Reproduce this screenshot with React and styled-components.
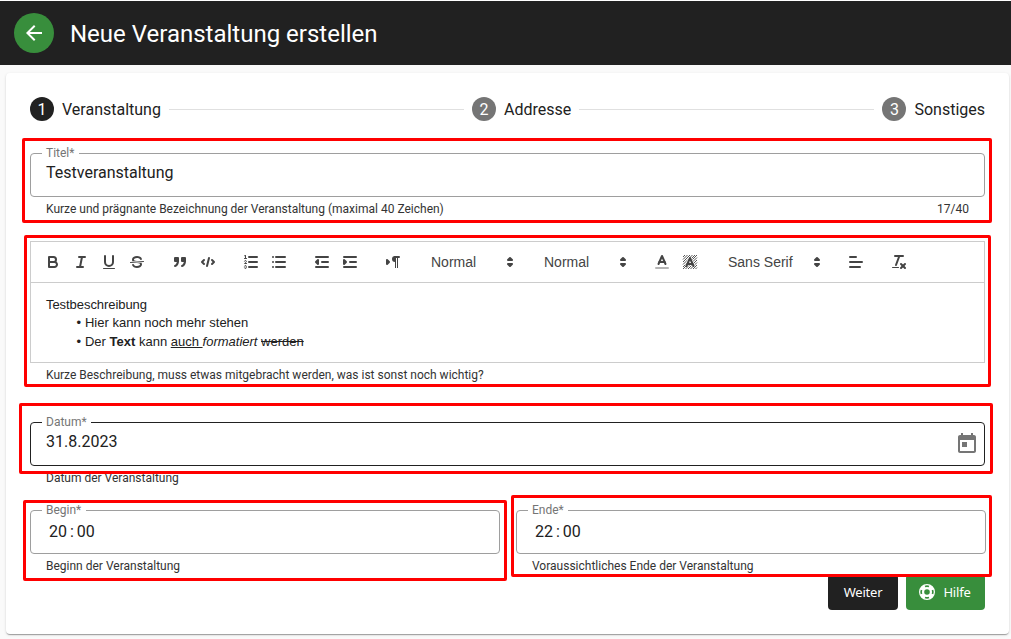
import React from "react";
import styled, { createGlobalStyle } from "styled-components";

const GlobalStyle = createGlobalStyle`
  *, *::before, *::after { box-sizing: border-box; }
  html, body { margin: 0; background: #fafafa; }
  body { font-family: Roboto, "Liberation Sans", sans-serif; color: #212121; overflow: hidden; }
`;

const Page = styled.div`
  height: 639px;
  display: flex;
  flex-direction: column;
  border-top: 1px solid #fff;
`;

const Header = styled.header`
  height: 64px;
  flex: none;
  display: flex;
  align-items: center;
  gap: 16px;
  padding: 0 14px;
  background: #212121;
  color: #fff;
`;

const BackButton = styled.button`
  width: 40px;
  height: 40px;
  border: 0;
  padding: 8px;
  border-radius: 50%;
  background: #388e3c;
  color: #fff;
  svg { display: block; }
`;

const PageTitle = styled.h1`
  margin: 0;
  padding-top: 2px;
  font-size: 24px;
  font-weight: 400;
  line-height: 32px;
  white-space: nowrap;
`;

const Card = styled.main`
  margin: 8px 2px 0 6px;
  height: 561px;
  padding: 24px;
  background: #fff;
  border-radius: 4px;
  box-shadow: 0 2px 1px -1px rgba(0, 0, 0, 0.2), 0 1px 1px rgba(0, 0, 0, 0.14),
    0 1px 3px rgba(0, 0, 0, 0.12);
`;

const Stepper = styled.div`
  display: flex;
  align-items: center;
  gap: 8px;
  height: 24px;
`;

const StepNumber = styled.span`
  width: 24px;
  height: 24px;
  flex: none;
  border-radius: 50%;
  background: ${(p) => (p.$active ? "#212121" : "#757575")};
  color: #fff;
  font-size: 16px;
  line-height: 26px;
  text-align: center;
`;

const StepLabel = styled.span`
  padding-top: 2px;
  font-size: 16px;
  line-height: 24px;
  white-space: nowrap;
`;

const StepLine = styled.span`
  flex: 1;
  height: 1px;
  background: #e0e0e0;
`;

const Section = styled.section`
  position: relative;
  flex: ${(p) => p.$flex || "none"};
  margin-top: ${(p) => p.$top || 0}px;
`;

const Highlight = styled.div`
  position: absolute;
  z-index: 2;
  inset: ${(p) => p.$inset};
  border: 3px solid #f00;
  border-radius: 2px;
  pointer-events: none;
`;

const Outline = styled.fieldset`
  height: 51px;
  margin: 0;
  min-width: 0;
  padding: 0 15px 0 11px;
  border: 1px solid ${(p) => (p.$strong ? "#212121" : "#9e9e9e")};
  border-radius: 4px;
  display: block;
`;

const Legend = styled.legend`
  height: 14px;
  padding: 0 4.5px 0 4px;
  font-size: 12px;
  line-height: 14px;
  color: #757575;
`;

const FieldBody = styled.div`
  display: flex;
  justify-content: space-between;
  padding: ${(p) => p.$top ?? 1}px 0 0 4px;
  font-size: 16px;
  line-height: 24px;
  height: 30px;
`;

const TimeValue = styled.div`
  display: flex;
  padding-left: 3px;
  gap: 3px;
`;

const ToggleIcon = styled.span`
  width: 24px;
  height: 24px;
  margin: 2px -10px 0 0;
  color: #757575;
  svg { display: block; }
`;

const Helper = styled.div`
  display: flex;
  justify-content: space-between;
  padding: 0 16px;
  margin-top: 4px;
  font-size: 12px;
  line-height: 16px;
  color: #333;
`;

const Editor = styled.div`
  height: 122px;
  border: 1px solid #ccc;
  font-family: "Liberation Sans", Arial, sans-serif;
`;

const Toolbar = styled.div`
  display: flex;
  gap: 15px;
  height: 41px;
  padding: 8px;
  border-bottom: 1px solid #ccc;
`;

const Group = styled.div`
  display: flex;
`;

const Tool = styled.button`
  width: 28px;
  height: 24px;
  padding: 3px 5px;
  border: 0;
  background: none;
  svg { display: block; }
`;

const QuillSvg = styled.svg`
  .s { fill: none; stroke: #444; stroke-width: 2; stroke-linecap: round; stroke-linejoin: round; }
  .t { fill: none; stroke: #444; stroke-width: 1; stroke-linecap: round; stroke-linejoin: round; }
  .f { fill: #444; }
  .sf { fill: #444; stroke: #444; stroke-width: 2; stroke-linecap: round; stroke-linejoin: round; }
  .h { fill: none; stroke: #444; stroke-width: 0.9; }
`;

const Picker = styled.div`
  display: flex;
  align-items: center;
  justify-content: space-between;
  width: ${(p) => p.$width}px;
  height: 24px;
  padding: 0 1px 0 9px;
  font-size: 14px;
  font-weight: 500;
  color: #444;
`;

const Content = styled.div`
  padding: 13px 15px 11px;
  font-size: 13px;
  line-height: 18.46px;
  color: #212121;
  p, ul { margin: 0; }
  p { letter-spacing: -0.06px; }
  ul { padding-left: 19.5px; list-style: none; }
  li { padding-left: 19.5px; }
  li::before {
    content: "\\2022";
    display: inline-block;
    width: 15.6px;
    margin-left: -19.5px;
    margin-right: 3.9px;
    text-align: right;
  }
`;

const TimeRow = styled.div`
  display: flex;
  gap: 16px;
  margin-right: -1px;
`;

const Actions = styled.div`
  display: flex;
  justify-content: flex-end;
  gap: 8px;
`;

const ActionButton = styled.button`
  display: flex;
  align-items: center;
  justify-content: center;
  gap: 7px;
  width: ${(p) => p.$width}px;
  height: 36px;
  padding: 0 ${(p) => p.$shift || 0}px 0 0;
  border: 0;
  border-radius: 4px;
  background: ${(p) => p.$color};
  color: #fff;
  font-family: "Noto Sans", sans-serif;
  font-size: 13px;
  font-weight: 400;
  letter-spacing: -0.2px;
`;

const Q = ({ children }) => (
  <QuillSvg width="18" height="18" viewBox="0 0 18 18">{children}</QuillSvg>
);

const L = ({ c = "s", p }) => <line className={c} x1={p[0]} y1={p[1]} x2={p[2]} y2={p[3]} />;

const icons = {
  bold: <><path className="s" d="M5,4H9.5A2.5,2.5,0,0,1,12,6.5v0A2.5,2.5,0,0,1,9.5,9H5V4Z" /><path className="s" d="M5,9h5.5A2.5,2.5,0,0,1,13,11.5v0A2.5,2.5,0,0,1,10.5,14H5V9Z" /></>,
  italic: <><L p={[7, 4, 13, 4]} /><L p={[5, 14, 11, 14]} /><L p={[8, 14, 10, 4]} /></>,
  underline: <><path className="s" d="M5,3V9a4.012,4.012,0,0,0,4,4H9a4.012,4.012,0,0,0,4-4V3" /><rect className="f" height="1" rx=".5" width="12" x="3" y="15" /></>,
  strike: <><L c="t" p={[15.5, 8.5, 2.5, 9.5]} /><path className="f" d="M9.007,8C6.542,7.791,6,7.519,6,6.5,6,5.792,7.283,5,9,5c1.571,0,2.765.679,2.969,1.309a1,1,0,0,0,1.9-.617C13.356,4.106,11.354,3,9,3,6.2,3,4,4.538,4,6.5a3.2,3.2,0,0,0,.5,1.843Z" /><path className="f" d="M8.984,10C11.457,10.208,12,10.479,12,11.5c0,0.708-1.283,1.5-3,1.5-1.571,0-2.765-.679-2.969-1.309a1,1,0,1,0-1.9.617C4.644,13.894,6.646,15,9,15c2.8,0,5-1.538,5-3.5a3.2,3.2,0,0,0-.5-1.843Z" /></>,
  quote: <><rect className="sf" height="3" width="3" x="4" y="5" /><rect className="sf" height="3" width="3" x="11" y="5" /><path className="sf" d="M7,8c0,4.031-3,5-3,5" /><path className="sf" d="M14,8c0,4.031-3,5-3,5" /></>,
  code: <><polyline className="s" points="5 7 3 9 5 11" /><polyline className="s" points="13 7 15 9 13 11" /><L p={[10, 5, 8, 13]} /></>,
  ordered: <><L p={[7, 4, 15, 4]} /><L p={[7, 9, 15, 9]} /><L p={[7, 14, 15, 14]} /><L c="t" p={[2.5, 5.5, 4.5, 5.5]} /><path className="f" d="M3.5,6A0.5,0.5,0,0,1,3,5.5V3.085l-0.276.138A0.5,0.5,0,0,1,2.053,3c-0.124-.247-0.023-0.324.224-0.447l1-.5A0.5,0.5,0,0,1,4,2.5v3A0.5,0.5,0,0,1,3.5,6Z" /><path className="t" d="M4.5,10.5h-2c0-.234,1.85-1.076,1.85-2.234A0.959,0.959,0,0,0,2.5,8.156" /><path className="t" d="M2.5,14.846a0.959,0.959,0,0,0,1.85-.109A0.7,0.7,0,0,0,3.75,14a0.688,0.688,0,0,0,.6-0.736,0.959,0.959,0,0,0-1.85-.109" /></>,
  bullet: <>{[4, 9, 14].map((y) => <React.Fragment key={y}><L p={[6, y, 15, y]} /><L p={[3, y, 3, y]} /></React.Fragment>)}</>,
  outdent: <><L p={[3, 14, 15, 14]} /><L p={[3, 4, 15, 4]} /><L p={[9, 9, 15, 9]} /><polyline className="s" points="5 7 5 11 3 9 5 7" /></>,
  indent: <><L p={[3, 14, 15, 14]} /><L p={[3, 4, 15, 4]} /><L p={[9, 9, 15, 9]} /><polyline className="sf" points="3 7 3 11 5 9 3 7" /></>,
  direction: <><polygon className="sf" points="3 11 5 9 3 7 3 11" /><L p={[15, 4, 11, 4]} /><path className="f" d="M11,3a3,3,0,0,0,0,6h1V3H11Z" /><rect className="f" height="11" width="1" x="11" y="4" /><rect className="f" height="11" width="1" x="13" y="4" /></>,
  color: <><line className="s" opacity=".4" x1="3" x2="15" y1="15" y2="15" /><polyline className="s" points="5.5 11 9 3 12.5 11" /><L p={[11.63, 9, 6.38, 9]} /></>,
  background: <>{[4, 6.5, 9, 11.5, 14, 16].map((n) => <path key={n} className="h" d={`M2,${n}L${n},2`} />)}{[4.5, 7, 9.5, 12, 14.5].map((n) => <path key={n} className="h" d={`M${n},16L16,${n}`} />)}<path d="M9 5L5.500 13M9 5L12.500 13" stroke="#fff" strokeWidth="3.500" opacity=".8" /><polyline className="s" points="5.5 13 9 5 12.5 13" /><L p={[11.63, 11, 6.38, 11]} /></>,
  align: <><L p={[3, 9, 15, 9]} /><L p={[3, 14, 13, 14]} /><L p={[3, 4, 9, 4]} /></>,
  clean: <><L p={[5, 3, 13, 3]} /><L p={[6, 12, 9.35, 3]} /><L p={[11, 11, 15, 15]} /><L p={[15, 11, 11, 15]} /><rect className="f" height="1" rx=".5" width="7" x="2" y="14" /></>,
  arrows: <><polygon className="sf" points="7 11 9 13 11 11 7 11" /><polygon className="sf" points="7 7 9 5 11 7 7 7" /></>,
};

const ToolGroup = ({ names }) => (
  <Group>{names.map((n) => <Tool key={n} aria-label={n}><Q>{icons[n]}</Q></Tool>)}</Group>
);

const PickerTool = ({ width, children }) => (
  <Picker $width={width}><span>{children}</span><Q>{icons.arrows}</Q></Picker>
);

const TimeField = ({ label, hour, helper, inset }) => (
  <Section $flex="1">
    <Outline>
      <Legend>{label}</Legend>
      <FieldBody $top={3}>
        <TimeValue><span>{hour}</span><span>:</span><span>00</span></TimeValue>
      </FieldBody>
    </Outline>
    <Helper>{helper}</Helper>
    <Highlight $inset={inset} />
  </Section>
);

export default function App() {
  return (
    <>
      <GlobalStyle />
      <Page>
        <Header>
          <BackButton aria-label="Zurück">
            <svg width="24" height="24" viewBox="0 0 24 24" fill="currentColor"><path d="M20 11H7.830l5.590-5.590L12 4l-8 8 8 8 1.410-1.410L7.830 13H20v-2z" /></svg>
          </BackButton>
          <PageTitle>Neue Veranstaltung erstellen</PageTitle>
        </Header>
        <Card>
          <Stepper>
            <StepNumber $active>1</StepNumber>
            <StepLabel>Veranstaltung</StepLabel>
            <StepLine />
            <StepNumber>2</StepNumber>
            <StepLabel>Addresse</StepLabel>
            <StepLine />
            <StepNumber>3</StepNumber>
            <StepLabel>Sonstiges</StepLabel>
          </Stepper>

          <Section $top={25}>
            <Outline>
              <Legend>Titel*</Legend>
              <FieldBody>Testveranstaltung</FieldBody>
            </Outline>
            <Helper>
              <span>Kurze und prägnante Bezeichnung der Veranstaltung (maximal 40 Zeichen)</span>
              <span>17/40</span>
            </Helper>
            <Highlight $inset="-8px -7px -6px -8px" />
          </Section>

          <Section $top={24}>
            <Editor>
              <Toolbar>
                <ToolGroup names={["bold", "italic", "underline", "strike"]} />
                <ToolGroup names={["quote", "code"]} />
                <ToolGroup names={["ordered", "bullet"]} />
                <ToolGroup names={["outdent", "indent"]} />
                <ToolGroup names={["direction"]} />
                <PickerTool width={98}>Normal</PickerTool>
                <PickerTool width={98}>Normal</PickerTool>
                <ToolGroup names={["color", "background"]} />
                <PickerTool width={108}>Sans Serif</PickerTool>
                <ToolGroup names={["align"]} />
                <ToolGroup names={["clean"]} />
              </Toolbar>
              <Content>
                <p>Testbeschreibung</p>
                <ul>
                  <li>Hier kann noch mehr stehen</li>
                  <li>Der <strong>Text</strong> kann <u>auch </u><em>formatiert</em> <s>werden</s></li>
                </ul>
              </Content>
            </Editor>
            <Helper>Kurze Beschreibung, muss etwas mitgebracht werden, was ist sonst noch wichtig?</Helper>
            <Highlight $inset="-6px -6px -4px -6px" />
          </Section>

          <Section $top={32}>
            <Outline $strong>
              <Legend>Datum*</Legend>
              <FieldBody>
                <span>31.8.2023</span>
                <ToggleIcon>
                  <svg width="24" height="24" viewBox="0 0 24 24" fill="currentColor"><path d="M19 3h-1V1h-2v2H8V1H6v2H5c-1.110 0-1.990.9-1.990 2L3 19c0 1.100.89 2 2 2h14c1.100 0 2-.9 2-2V5c0-1.100-.9-2-2-2zm0 16H5V8h14v11zM7 10h5v5H7z" /></svg>
                </ToggleIcon>
              </FieldBody>
            </Outline>
            <Helper>Datum der Veranstaltung</Helper>
            <Highlight $inset="-12px -8px 12px -11px" />
          </Section>

          <Section $top={17}>
            <TimeRow>
              <TimeField label="Begin*" hour="20" helper="Beginn der Veranstaltung" inset="-3px -7px -7px -7px" />
              <TimeField label="Ende*" hour="22" helper="Voraussichtliches Ende der Veranstaltung" inset="-8px -6px -3px -5px" />
            </TimeRow>
          </Section>

          <Actions>
            <ActionButton $width={70} $color="#212121">Weiter</ActionButton>
            <ActionButton $width={79} $color="#388e3c" $shift={2}>
              <svg width="18" height="18" viewBox="0 0 18 18" fill="none">
                <circle cx="9" cy="9" r="5.400" stroke="currentColor" strokeWidth="5.200" />
                <path d="M7 3.500Q9 2.700 11 3.500M7 14.500Q9 15.300 11 14.500M3.500 7Q2.700 9 3.500 11M14.500 7Q15.300 9 14.500 11" stroke="#388e3c" strokeWidth="1.700" />
              </svg>
              Hilfe
            </ActionButton>
          </Actions>
        </Card>
      </Page>
    </>
  );
}
